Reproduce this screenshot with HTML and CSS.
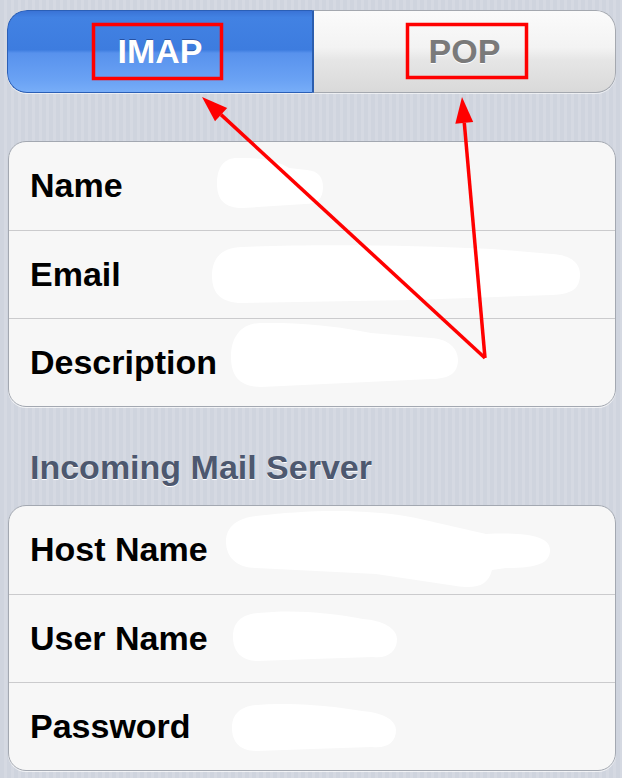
FILE: index.html
```html
<!DOCTYPE html>
<html>
<head>
<meta charset="utf-8">
<link rel="stylesheet" href="styles.css">
</head>
<body>
<div class="page">
  <div class="segmented">
    <div class="seg seg-on">IMAP</div>
    <div class="seg seg-off">POP</div>
  </div>

  <div class="card card-first">
    <div class="row">
      <span class="label">Name</span>
      <svg class="blob blob-name" width="106" height="50" viewBox="0 0 106 50"><path d="M20,0 C40,-1 62,3 72,10 L90,12 C102,13 106,20 106,29 C106,41 100,46 88,46 L26,50 C8,50 0,42 0,26 C0,8 8,0 20,0 Z"/></svg>
    </div>
    <div class="row">
      <span class="label">Email</span>
      <svg class="blob blob-email" width="368" height="59" viewBox="0 0 368 59"><path d="M30,3 C100,0 200,1 280,5 L340,10 C360,11 368,20 368,30 C368,45 360,50 340,51 L200,56 L30,59 C10,59 0,50 0,32 C0,13 10,4 30,3 Z"/></svg>
    </div>
    <div class="row">
      <span class="label">Description</span>
      <svg class="blob blob-desc" width="227" height="64" viewBox="0 0 227 64"><path d="M30,0 C70,-1 110,4 140,10 L200,15 C218,16 227,26 227,37 C227,50 218,56 200,56 L30,64 C10,64 0,54 0,34 C0,12 12,0 30,0 Z"/></svg>
    </div>
  </div>

  <div class="section-title">Incoming Mail Server</div>

  <div class="card">
    <div class="row">
      <span class="label">Host Name</span>
      <svg class="blob blob-host" width="324" height="78" viewBox="0 0 324 78"><path d="M30,6 C80,0 140,-2 190,8 L260,24 C300,22 324,26 324,40 C324,54 310,58 280,58 L266,60 C262,76 250,79 230,76 L150,64 L30,58 C10,58 0,46 0,32 C0,16 12,8 30,6 Z"/></svg>
    </div>
    <div class="row">
      <span class="label">User Name</span>
      <svg class="blob blob-user" width="164" height="50" viewBox="0 0 164 50"><path d="M25,2 C60,-2 100,2 130,8 C155,10 164,20 164,28 C164,40 155,48 140,46 L80,48 L25,50 C8,50 0,40 0,26 C0,10 10,3 25,2 Z"/></svg>
    </div>
    <div class="row">
      <span class="label">Password</span>
      <svg class="blob blob-pass" width="164" height="47" viewBox="0 0 164 47"><path d="M25,1 C60,-2 100,2 130,7 C155,9 164,18 164,26 C164,38 155,45 140,43 L80,45 L25,47 C8,47 0,38 0,24 C0,9 10,2 25,1 Z"/></svg>
    </div>
  </div>

  <svg class="annotations" width="622" height="778" viewBox="0 0 622 778">
    <rect x="93.5" y="24.5" width="128" height="54" fill="none" stroke="#ff0000" stroke-width="3.5"/>
    <rect x="407.5" y="24.5" width="119" height="53" fill="none" stroke="#ff0000" stroke-width="3.5"/>
    <line x1="485" y1="358" x2="221" y2="114.6" stroke="#ff0000" stroke-width="3.5"/>
    <polygon points="202,97 227.2,108 215,121.2" fill="#ff0000"/>
    <line x1="485" y1="358" x2="464.3" y2="122.9" stroke="#ff0000" stroke-width="3.5"/>
    <polygon points="462,97 473.2,122.1 455.3,123.7" fill="#ff0000"/>
  </svg>
</div>
</body>
</html>
```

FILE: styles.css
```css
html, body {
  margin: 0;
  padding: 0;
}

body {
  width: 622px;
  height: 778px;
  overflow: hidden;
  background-color: #d2d7e0;
  background-image: repeating-linear-gradient(90deg, #cfd4de 0px, #cfd4de 4px, #d5d9e2 4px, #d5d9e2 7px);
  font-family: "Liberation Sans", Arial, Helvetica, sans-serif;
}

.page {
  position: relative;
  width: 622px;
  height: 778px;
  padding-top: 10px;
  box-sizing: border-box;
}

.segmented {
  display: flex;
  margin: 0 6px 0 7px;
  height: 83px;
  border-radius: 20px;
  overflow: hidden;
  box-shadow: 0 1px 0 rgba(255, 255, 255, 0.6);
}

.seg {
  display: flex;
  align-items: center;
  justify-content: center;
  font-size: 34px;
  font-weight: bold;
  box-sizing: border-box;
}

.seg-on {
  width: 307px;
  color: #ffffff;
  background: linear-gradient(180deg, #3a73d6 0%, #4282e3 8%, #3d7cdf 48%, #5892ed 52%, #6aa2f4 85%, #77adf8 100%);
  border: 1px solid #2b5fb6;
  border-right: 2px solid #2c5eae;
  border-radius: 20px 0 0 20px;
  text-shadow: 0 -1px 0 rgba(0, 0, 40, 0.35);
}

.seg-off {
  flex: 1;
  color: #7a7a7a;
  background: linear-gradient(180deg, #fbfbfb 0%, #f3f3f3 45%, #e6e6e6 60%, #d9d9d9 100%);
  border: 1px solid #a4a8af;
  border-left: none;
  border-radius: 0 20px 20px 0;
  text-shadow: 0 1px 0 #ffffff;
}

.card {
  margin: 0 6px 0 8px;
  background: #f7f7f7;
  border: 1px solid #a3a8b1;
  border-radius: 18px;
  box-shadow: 0 1px 0 rgba(255, 255, 255, 0.7);
  overflow: hidden;
}

.card-first {
  margin-top: 48px;
}

.row {
  display: grid;
  grid-template-columns: 1fr;
  height: 88px;
  box-sizing: border-box;
  padding-left: 21px;
}

.row + .row {
  border-top: 1px solid #cbcbcd;
}

.label {
  grid-area: 1 / 1;
  align-self: center;
  justify-self: start;
  font-size: 34px;
  font-weight: bold;
  color: #000000;
  line-height: 40px;
  margin-top: -2px;
}

.blob {
  grid-area: 1 / 1;
  align-self: start;
  justify-self: start;
  fill: #ffffff;
  display: block;
}

.blob-name { margin-left: 187px; margin-top: 16px; }
.blob-email { margin-left: 182px; margin-top: 13px; }
.blob-desc { margin-left: 201px; margin-top: 4px; }
.blob-host { margin-left: 196px; margin-top: 4px; }
.blob-user { margin-left: 203px; margin-top: 16px; }
.blob-pass { margin-left: 202px; margin-top: 21px; }

.section-title {
  margin: 40px 0 18px 30px;
  height: 40px;
  line-height: 40px;
  font-size: 34px;
  font-weight: bold;
  color: #4d586f;
  text-shadow: 0 1px 0 #ffffff;
}

.annotations {
  position: absolute;
  left: 0;
  top: 0;
  pointer-events: none;
}
```
